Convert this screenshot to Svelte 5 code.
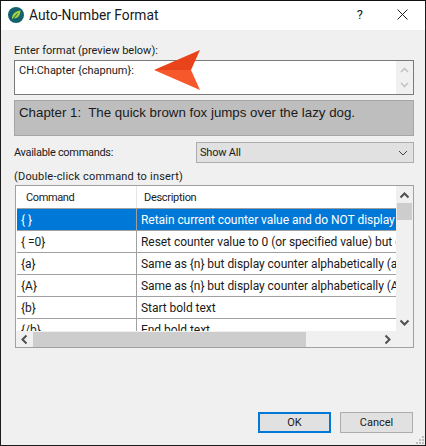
<script>
  const rows = [
    ['{ }', 'Retain current counter value and do NOT display anything', true],
    ['{ =0}', 'Reset counter value to 0 (or specified value) but do not display', false],
    ['{a}', 'Same as {n} but display counter alphabetically (a, b, c...)', false],
    ['{A}', 'Same as {n} but display counter alphabetically (A, B, C...)', false],
    ['{b}', 'Start bold text', false],
    ['{/b}', 'End bold text', false]
  ];
</script>

<div class="window">
  <header class="titlebar">
    <svg class="logo" width="18" height="18" viewBox="0 0 18 18">
      <circle cx="9" cy="9" r="8" fill="#14606e" />
      <path d="M5 13.5C4.5 8.5 8 5 13.5 4.5C13.5 10 10 13 6.5 12.2Z" fill="#a4cf3e" />
      <path d="M5 14L10.5 7.5" stroke="#14606e" stroke-width="1" fill="none" />
    </svg>
    <span class="title">Auto-Number Format</span>
    <span class="help">?</span>
    <svg class="close" width="11" height="11" viewBox="0 0 11 11">
      <path d="M0.5 0.5L10.5 10.5M10.5 0.5L0.5 10.5" stroke="#222" stroke-width="1" fill="none" />
    </svg>
  </header>

  <main class="body">
    <label class="format-label" for="fmt">Enter format (preview below):</label>
    <div class="format-box">
      <div class="format-text" id="fmt">CH:Chapter {'{'}chapnum{'}'}:</div>
      <div class="format-scroll">
        <svg width="9" height="6" viewBox="0 0 9 6"><path d="M1 5L4.5 1.5L8 5" stroke="#c4c4c4" stroke-width="1.6" fill="none" /></svg>
        <svg width="9" height="6" viewBox="0 0 9 6"><path d="M1 1L4.5 4.5L8 1" stroke="#c4c4c4" stroke-width="1.6" fill="none" /></svg>
      </div>
      <svg class="pointer" width="48" height="42" viewBox="0 0 48 42">
        <path d="M1 21L47 1L38 21Z" fill="#e8431a" />
        <path d="M1 21L47 41L38 21Z" fill="#f6582b" />
      </svg>
    </div>

    <div class="preview">Chapter 1:&nbsp; The quick brown fox jumps over the lazy dog.</div>

    <div class="commands">
      <span class="avail">Available commands:</span>
      <div class="select">
        <span>Show All</span>
        <svg width="10" height="6" viewBox="0 0 10 6"><path d="M1 1L5 5L9 1" stroke="#444" stroke-width="1" fill="none" /></svg>
      </div>
    </div>

    <div class="hint">(Double-click command to insert)</div>

    <div class="listview">
      <div class="list-main">
        <div class="viewport">
          <div class="row head">
            <div class="c1">Command</div>
            <div class="c2">Description</div>
          </div>
          {#each rows as r}
            <div class="row" class:selected={r[2]}>
              <div class="c1">{r[0]}</div>
              <div class="c2">{r[1]}</div>
            </div>
          {/each}
        </div>
        <div class="vscroll">
          <svg width="11" height="7" viewBox="0 0 11 7"><path d="M1.5 5.5L5.5 1.5L9.5 5.5" stroke="#505050" stroke-width="2" fill="none" /></svg>
          <div class="vthumb"></div>
          <div class="grow"></div>
          <svg width="11" height="7" viewBox="0 0 11 7"><path d="M1.5 1.5L5.5 5.5L9.5 1.5" stroke="#505050" stroke-width="2" fill="none" /></svg>
        </div>
      </div>
      <div class="hscroll">
        <svg width="7" height="11" viewBox="0 0 7 11"><path d="M5.5 1.5L1.5 5.5L5.5 9.5" stroke="#505050" stroke-width="2" fill="none" /></svg>
        <div class="hthumb"></div>
        <svg width="7" height="11" viewBox="0 0 7 11"><path d="M1.5 1.5L5.5 5.5L1.5 9.5" stroke="#505050" stroke-width="2" fill="none" /></svg>
      </div>
    </div>

    <footer class="buttons">
      <div class="btn primary">OK</div>
      <div class="btn">Cancel</div>
    </footer>
  </main>

  <svg class="grip" width="10" height="10" viewBox="0 0 10 10">
    <path d="M7 1h2v2H7zM4 4h2v2H4zM7 4h2v2H7zM1 7h2v2H1zM4 7h2v2H4zM7 7h2v2H7z" fill="#bdbdbd" />
  </svg>
</div>

<style>
  :global(body) { margin: 0; }
  .window {
    position: relative;
    box-sizing: border-box;
    width: 426px;
    height: 446px;
    border: 1px solid #1c1c1c;
    border-top-color: #111;
    background: #f0f0f0;
    font-family: Roboto, "Open Sans", sans-serif;
    font-size: 11px;
    color: #1a1a1a;
    display: flex;
    flex-direction: column;
    overflow: hidden;
  }
  .titlebar {
    box-sizing: border-box;
    height: 29px;
    flex: none;
    background: #fff;
    display: flex;
    align-items: center;
    padding: 0 0 2px 6px;
  }
  .logo { margin-right: 4px; }
  .title { flex: 1; font-size: 13.8px; }
  .help { font-size: 13px; margin-right: 34px; }
  .close { margin-right: 17px; }
  .body {
    flex: 1;
    padding: 12px 11px 0 13px;
    display: flex;
    flex-direction: column;
    min-height: 0;
  }
  .format-label { height: 18px; line-height: 17px; }
  .format-box {
    position: relative;
    box-sizing: border-box;
    height: 35px;
    border: 1px solid #7a7a7a;
    background: #fff;
    display: flex;
  }
  .format-text { flex: 1; padding: 1px 4px 0; line-height: 17px; }
  .format-scroll {
    width: 17px;
    background: #f0f0f0;
    display: flex;
    flex-direction: column;
    align-items: center;
    justify-content: space-around;
    padding: 2px 0;
  }
  .pointer { position: absolute; left: 138px; top: -12px; }
  .preview {
    box-sizing: border-box;
    height: 36px;
    margin-top: 5px;
    background: #bebebe;
    border: 1px solid #a5a5a5;
    padding: 2px 4px;
    font-family: "Liberation Sans", Arial, sans-serif;
    font-size: 13.3px;
    line-height: 20px;
    white-space: nowrap;
  }
  .commands {
    display: flex;
    align-items: center;
    justify-content: space-between;
    margin-top: 6px;
    height: 21px;
  }
  .avail { letter-spacing: -0.3px; }
  .select {
    box-sizing: border-box;
    width: 218px;
    height: 21px;
    border: 1px solid #adadad;
    background: #e1e1e1;
    display: flex;
    align-items: center;
    justify-content: space-between;
    padding: 0 5px 0 3px;
    letter-spacing: -0.2px;
  }
  .hint { margin-top: 6px; height: 16px; line-height: 16px; letter-spacing: 0.2px; }
  .listview {
    box-sizing: border-box;
    margin-left: 1px;
    height: 163px;
    border: 1px solid #a0a0a0;
    display: flex;
    flex-direction: column;
  }
  .list-main { flex: 1; min-height: 0; display: flex; }
  .viewport { flex: 1; min-width: 0; overflow: hidden; background: #fff; font-size: 12px; }
  .row { display: flex; height: 22px; margin-left: 1px; box-sizing: border-box; border-bottom: 1px solid #a0a0a0; white-space: nowrap; }
  .row.head { height: 23px; font-size: 11px; }
  .row.head .c1 { padding-left: 9px; border-right-color: #e5e5e5; line-height: 24px; letter-spacing: -0.4px; }
  .row.head .c2 { padding-left: 7px; line-height: 24px; letter-spacing: -0.3px; }
  .c1 { box-sizing: border-box; width: 120px; flex: none; padding-left: 4px; border-right: 1px solid #a0a0a0; line-height: 22px; }
  .c2 { flex: 1; min-width: 0; overflow: hidden; padding-left: 4px; line-height: 22px; letter-spacing: -0.05px; }
  .row.selected { background: #0078d7; color: #fff; }
  .vscroll {
    width: 17px;
    flex: none;
    background: #f0f0f0;
    display: flex;
    flex-direction: column;
    align-items: center;
    padding: 6px 0 5px;
    box-sizing: border-box;
  }
  .vthumb { width: 15px; height: 17px; background: #cdcdcd; margin-top: 4px; }
  .grow { flex: 1; }
  .hscroll {
    height: 16px;
    flex: none;
    background: #f0f0f0;
    display: flex;
    align-items: center;
    padding: 0 22px 0 5px;
    box-sizing: border-box;
  }
  .hthumb { width: 273px; height: 15px; background: #cdcdcd; margin-left: 5px; margin-right: auto; }
  .buttons {
    margin-top: auto;
    margin-bottom: 12px;
    margin-right: 1px;
    display: flex;
    justify-content: flex-end;
    gap: 9px;
  }
  .btn {
    box-sizing: border-box;
    width: 73px;
    height: 21px;
    border: 1px solid #adadad;
    background: #e1e1e1;
    display: flex;
    align-items: center;
    justify-content: center;
  }
  .btn.primary { border: 2px solid #0078d7; }
  .grip { position: absolute; right: 0; bottom: 0; }
</style>
